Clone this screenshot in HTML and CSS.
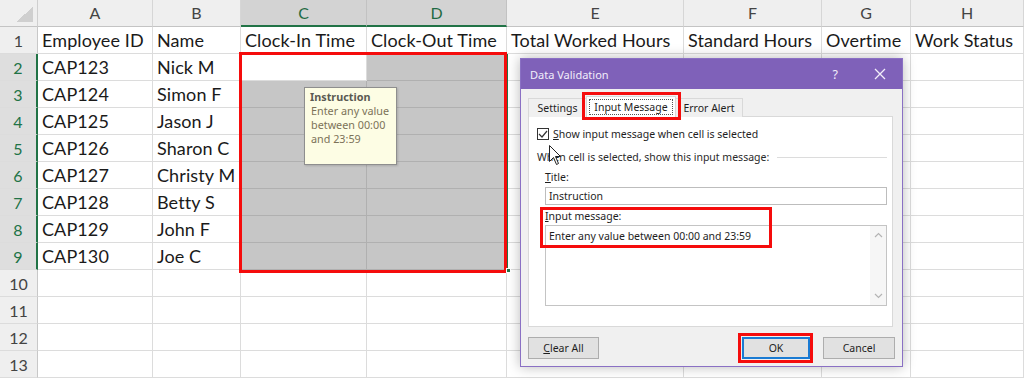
FILE: index.html
```html
<!DOCTYPE html>
<html>
<head>
<meta charset="utf-8">
<link rel="stylesheet" href="styles.css">
</head>
<body>
<div class="sheet">
  <div class="grid">
    <div class="corner"></div><div class="ch">A</div><div class="ch">B</div><div class="ch sel">C</div><div class="ch sel">D</div><div class="ch">E</div><div class="ch">F</div><div class="ch">G</div><div class="ch">H</div>

    <div class="rh">1</div><div class="c">Employee ID</div><div class="c">Name</div><div class="c">Clock-In Time</div><div class="c">Clock-Out Time</div><div class="c">Total Worked Hours</div><div class="c">Standard Hours</div><div class="c">Overtime</div><div class="c">Work Status</div>

    <div class="rh sel">2</div><div class="c">CAP123</div><div class="c">Nick M</div><div class="c act"></div><div class="c s"></div><div class="c"></div><div class="c"></div><div class="c"></div><div class="c"></div>
    <div class="rh sel">3</div><div class="c">CAP124</div><div class="c">Simon F</div><div class="c s"></div><div class="c s"></div><div class="c"></div><div class="c"></div><div class="c"></div><div class="c"></div>
    <div class="rh sel">4</div><div class="c">CAP125</div><div class="c">Jason J</div><div class="c s"></div><div class="c s"></div><div class="c"></div><div class="c"></div><div class="c"></div><div class="c"></div>
    <div class="rh sel">5</div><div class="c">CAP126</div><div class="c">Sharon C</div><div class="c s"></div><div class="c s"></div><div class="c"></div><div class="c"></div><div class="c"></div><div class="c"></div>
    <div class="rh sel">6</div><div class="c">CAP127</div><div class="c">Christy M</div><div class="c s"></div><div class="c s"></div><div class="c"></div><div class="c"></div><div class="c"></div><div class="c"></div>
    <div class="rh sel">7</div><div class="c">CAP128</div><div class="c">Betty S</div><div class="c s"></div><div class="c s"></div><div class="c"></div><div class="c"></div><div class="c"></div><div class="c"></div>
    <div class="rh sel">8</div><div class="c">CAP129</div><div class="c">John F</div><div class="c s"></div><div class="c s"></div><div class="c"></div><div class="c"></div><div class="c"></div><div class="c"></div>
    <div class="rh sel">9</div><div class="c">CAP130</div><div class="c">Joe C</div><div class="c s"></div><div class="c s"></div><div class="c"></div><div class="c"></div><div class="c"></div><div class="c"></div>
    <div class="rh">10</div><div class="c"></div><div class="c"></div><div class="c"></div><div class="c"></div><div class="c"></div><div class="c"></div><div class="c"></div><div class="c"></div>
    <div class="rh">11</div><div class="c"></div><div class="c"></div><div class="c"></div><div class="c"></div><div class="c"></div><div class="c"></div><div class="c"></div><div class="c"></div>
    <div class="rh">12</div><div class="c"></div><div class="c"></div><div class="c"></div><div class="c"></div><div class="c"></div><div class="c"></div><div class="c"></div><div class="c"></div>
    <div class="rh">13</div><div class="c"></div><div class="c"></div><div class="c"></div><div class="c"></div><div class="c"></div><div class="c"></div><div class="c"></div><div class="c"></div>
  </div>

  <div class="sel-green"></div>
  <div class="sel-red"></div>
  <div class="fill-handle"></div>

  <div class="tip">
    <div class="tip-t">Instruction</div>
    <div class="tip-b">Enter any value<br>between 00:00<br>and 23:59</div>
  </div>

  <div class="dialog">
    <div class="titlebar">
      <span class="dtitle">Data Validation</span>
      <span class="help">?</span>
      <svg class="close" width="12" height="12" viewBox="0 0 12 12"><path d="M1 1 L11 11 M11 1 L1 11" stroke="#f2eefa" stroke-width="1.3" fill="none"/></svg>
    </div>
    <div class="dbody">
      <div class="tabs">
        <div class="tab t-settings">Settings</div>
        <div class="tab t-input active"><span class="focus">Input Message</span></div>
        <div class="tab t-error">Error Alert</div>
      </div>
      <div class="panel">
        <div class="chk">
          <span class="box"><svg width="10" height="10" viewBox="0 0 10 10"><path d="M1 5 L4 8 L9 2" stroke="#333" stroke-width="1.2" fill="none"/></svg></span>
          <span><u>S</u>how input message when cell is selected</span>
        </div>
        <div class="group"><span>When cell is selected, show this input message:</span><span class="rule"></span></div>
        <div class="lbl"><u>T</u>itle:</div>
        <div class="field">Instruction</div>
        <div class="lbl"><u>I</u>nput message:</div>
        <div class="area">
          <div class="atext">Enter any value between 00:00 and 23:59</div>
          <div class="sb">
            <svg width="9" height="6" viewBox="0 0 9 6"><path d="M1 5 L4.5 1.5 L8 5" stroke="#b4b4b4" stroke-width="1.2" fill="none"/></svg>
            <svg width="9" height="6" viewBox="0 0 9 6"><path d="M1 1 L4.5 4.5 L8 1" stroke="#b4b4b4" stroke-width="1.2" fill="none"/></svg>
          </div>
        </div>
      </div>
      <div class="buttons">
        <div class="btn b-clear"><u>C</u>lear All</div>
        <div class="spacer"></div>
        <div class="btn b-ok">OK</div>
        <div class="btn b-cancel">Cancel</div>
      </div>
    </div>
    <div class="hl hl-tab"></div>
    <div class="hl hl-msg"></div>
    <div class="hl hl-ok"></div>
    <svg class="cursor" width="13" height="21" viewBox="0 0 13 21"><path d="M0.5 0.5 L0.5 16.5 L4.5 12.5 L7.5 19.5 L9.5 18.5 L6.5 11.5 L11.5 11.5 Z" fill="#fff" stroke="#222" stroke-width="1"/></svg>
  </div>
</div>
</body>
</html>
```

FILE: styles.css
```css
* { box-sizing: border-box; }
body { margin: 0; background: #fff; }

.sheet {
  position: relative;
  width: 1024px;
  height: 380px;
  overflow: hidden;
  font-family: Lato, "Open Sans", sans-serif;
}

.grid {
  display: grid;
  grid-template-columns: 38px 115px 88px 126px 140px 177px 138px 89px 113px;
  grid-auto-rows: 27px;
}
.grid > div {
  border-right: 1px solid #dcdcdc;
  border-bottom: 1px solid #dcdcdc;
  white-space: nowrap;
  overflow: hidden;
}

.corner {
  background-color: #efefef;
  background-image: linear-gradient(to top left, #cfcfcf 50%, transparent 50%);
  background-size: 17px 15px;
  background-position: right 4px bottom 4px;
  background-repeat: no-repeat;
  border-bottom-color: #c4c4c4 !important;
  border-right-color: #cfcfcf !important;
}

.ch {
  background: #efefef;
  text-align: center;
  font-size: 16px;
  color: #444;
  line-height: 26px;
  border-bottom-color: #c4c4c4 !important;
  border-right-color: #d6d6d6 !important;
}
.ch.sel {
  background: #d3d3d3;
  color: #1f6b43;
  border-bottom: 2px solid #217346 !important;
  border-right-color: #c2c2c2 !important;
}

.rh {
  background: #efefef;
  text-align: center;
  font-size: 16px;
  color: #444;
  line-height: 28px;
  border-right-color: #c8c8c8 !important;
}
.rh.sel {
  background: #dedede;
  color: #217346;
  border-right: 2px solid #217346 !important;
}

.c {
  font-size: 18px;
  letter-spacing: 0.1px;
  color: #1a1a1a;
  padding-left: 4px;
  line-height: 27px;
}
.c.s {
  background: #c6c6c6;
  border-color: #b0b0b0;
}
.c.act { background: #fff; }

.sel-red {
  position: absolute;
  left: 239px;
  top: 52px;
  width: 268px;
  height: 221px;
  border: 3px solid #f50c0c;
}
.sel-green {
  position: absolute;
  left: 506px;
  top: 54px;
  width: 2px;
  height: 218px;
  background: #217346;
}
.fill-handle {
  position: absolute;
  left: 506px;
  top: 268px;
  width: 5px;
  height: 5px;
  background: #217346;
  border: 1px solid #fff;
}

.tip {
  position: absolute;
  left: 304px;
  top: 87px;
  width: 93px;
  height: 78px;
  background: #fdfde4;
  border: 1px solid #8e8e8e;
  box-shadow: 1px 1px 2px rgba(0,0,0,0.15);
  padding: 2px 2px 0 5px;
  font-family: "Noto Sans", "Open Sans", sans-serif;
  font-size: 10.8px;
  line-height: 14px;
  white-space: nowrap;
}
.tip-t { font-weight: bold; color: #5a5a52; }
.tip-b { color: #7c7258; padding-left: 1px; }

.dialog {
  position: absolute;
  left: 520px;
  top: 58px;
  width: 383px;
  height: 309px;
  border: 1px solid #8a70c4;
  background: #f0f0f0;
  box-shadow: 0 0 12px rgba(0,0,0,0.28);
  font-family: "Noto Sans", "Open Sans", sans-serif;
  font-size: 10.5px;
  color: #1e1e1e;
}
.titlebar {
  height: 30px;
  background: #7f61b9;
  display: flex;
  align-items: center;
  padding-left: 9px;
  color: #f2eefa;
}
.dtitle { font-size: 11px; flex: 1; }
.help { font-size: 12.5px; margin-right: 36px; }
.close { margin-right: 16px; }

.dbody { padding: 0 9px 0 7px; }

.tabs {
  display: flex;
  align-items: flex-end;
  height: 21px;
  margin-top: 7px;
  margin-bottom: -1px;
  position: relative;
  z-index: 1;
}
.tab {
  height: 19px;
  border: 1px solid #d9d9d9;
  border-bottom: none;
  background: #f0f0f0;
  text-align: center;
  line-height: 18px;
}
.t-settings { width: 58px; border-right: none; }
.t-input { width: 90px; }
.t-error { width: 67px; border-left: none; }
.tab.active {
  height: 21px;
  background: #fff;
  padding-top: 2px;
  line-height: 15px;
}
.focus {
  display: inline-block;
  border: 1px dotted #555;
  padding: 0 4px;
  line-height: 14px;
}

.panel {
  height: 211px;
  background: #fff;
  border: 1px solid #d9d9d9;
  padding: 10px 5px 0 16px;
}
.chk {
  display: flex;
  align-items: center;
  height: 14px;
  line-height: 14px;
  margin-left: -8px;
}
.box {
  width: 12px;
  height: 12px;
  border: 1px solid #333;
  display: flex;
  align-items: center;
  justify-content: center;
  margin-right: 4px;
  background: #fff;
}
.group {
  display: flex;
  align-items: center;
  margin-top: 9px;
  margin-left: -8px;
  line-height: 14px;
  color: #2a2a2a;
}
.rule {
  flex: 1;
  height: 1px;
  background: #dcdcdc;
  margin-left: 8px;
}
.lbl {
  line-height: 14px;
  margin-top: 6px;
}
.field {
  margin-top: 3px;
  height: 18px;
  border: 1px solid #bdbdbd;
  padding-left: 3px;
  line-height: 16px;
}
.lbl + .area { margin-top: 2px; }
.field + .lbl { margin-top: 4px; }
.area {
  height: 81px;
  border: 1px solid #c4c4c4;
  display: flex;
}
.atext {
  flex: 1;
  padding: 3px 0 0 3px;
  line-height: 14px;
}
.sb {
  width: 16px;
  background: #f6f6f6;
  display: flex;
  flex-direction: column;
  justify-content: space-between;
  align-items: center;
  padding: 6px 0 6px;
}

.buttons {
  display: flex;
  margin-top: 10px;
  margin-right: -2px;
  height: 22px;
}
.spacer { flex: 1; }
.btn {
  height: 22px;
  background: #e1e1e1;
  border: 1px solid #adadad;
  text-align: center;
  line-height: 20px;
}
.b-clear { width: 71px; }
.b-ok { width: 68px; border: 2px solid #1a7bd3; line-height: 18px; margin-right: 13px; }
.b-cancel { width: 72px; }

.hl {
  position: absolute;
  border: 3px solid #f50c0c;
}
.hl-tab { left: 61px; top: 33px; width: 99px; height: 28px; z-index: 2; }
.hl-msg { left: 19px; top: 148px; width: 232px; height: 41px; }
.hl-ok { left: 217px; top: 274px; width: 75px; height: 30px; }

.cursor {
  position: absolute;
  left: 28px;
  top: 86px;
}
```
